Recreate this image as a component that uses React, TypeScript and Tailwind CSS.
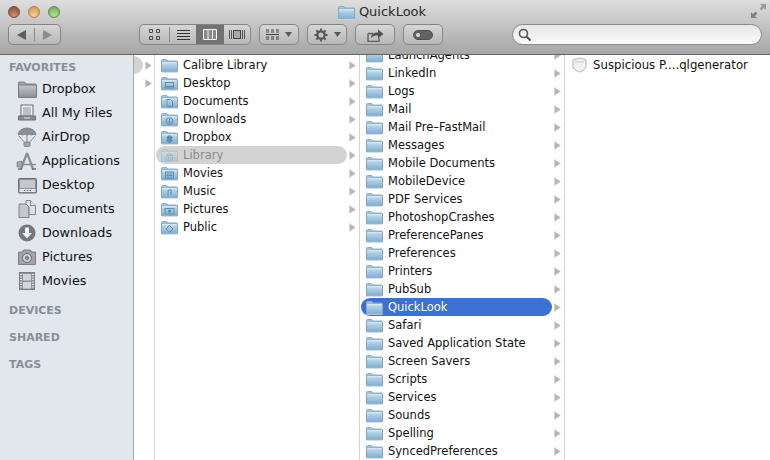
import type { ReactNode } from "react"

const font = "font-['DejaVu_Sans',sans-serif]"

const favorites = ["Dropbox", "All My Files", "AirDrop", "Applications", "Desktop", "Documents", "Downloads", "Pictures", "Movies"]
const homeFolders = ["Calibre Library", "Desktop", "Documents", "Downloads", "Dropbox", "Library", "Movies", "Music", "Pictures", "Public"]
const libraryFolders = [
  "LaunchAgents", "LinkedIn", "Logs", "Mail", "Mail Pre–FastMail", "Messages", "Mobile Documents", "MobileDevice",
  "PDF Services", "PhotoshopCrashes", "PreferencePanes", "Preferences", "Printers", "PubSub", "QuickLook", "Safari",
  "Saved Application State", "Screen Savers", "Scripts", "Services", "Sounds", "Spelling", "SyncedPreferences",
]

const glyphs: Record<string, ReactNode> = {
  Desktop: <><rect x="4.5" y="6.5" width="8" height="5.5" fill="none" /><path d="M5 10.5h7" /></>,
  Documents: <path d="M6 5.5h3.5l2 2v5H6z" fill="none" />,
  Downloads: <><circle cx="8.5" cy="9" r="3.4" fill="none" /><path d="M8.5 7v3.5M7 9.5l1.5 1.5L10 9.5" fill="none" /></>,
  Dropbox: <path d="M8.5 5.5l3 2-1.5 1.5 1.5 1.5-3 2-3-2L7 9 5.5 7.5z" fill="#5f8eb0" />,
  Library: <path d="M5 7.5l3.5-2 3.5 2zM5.5 8.5v3M7.5 8.5v3M9.5 8.5v3M11.5 8.5v3M4.5 12h8" fill="none" />,
  Movies: <><rect x="4.5" y="6" width="8" height="6.5" fill="none" /><path d="M7 6v6.5M10 6v6.5M4.5 9.2h8" /></>,
  Music: <path d="M7 11.5V6.5l3-.8v5" fill="none" />,
  Pictures: <><rect x="4" y="6.5" width="9" height="5.5" fill="none" /><circle cx="8.5" cy="9.2" r="1.2" fill="#5f8eb0" /></>,
  Public: <path d="M8.5 5.5l3.5 3.5-3.5 3.5L5 9z" fill="none" />,
}

function Folder({ name, dim, plain }: { name?: string; dim?: boolean; plain?: boolean }) {
  return (
    <svg width="17" height="15" viewBox="0 0 17 15" className={`shrink-0 ${dim ? "opacity-40" : ""}`}>
      <defs>
        <linearGradient id="folderFace" x1="0" y1="0" x2="0" y2="1">
          <stop offset="0" stopColor="#c4dcee" />
          <stop offset="1" stopColor="#7fb0d3" />
        </linearGradient>
      </defs>
      <path d="M.5 13V2.5q0-1 1-1h4.2l1.3 1.5h8.500q1 0 1 1V13z" fill="#a3c6df" stroke="#86aecb" />
      <rect x=".5" y="4" width="16" height="9.5" fill="url(#folderFace)" stroke="#80a9c8" />
      <path d="M1 4.700h15" stroke="#e2eef6" />
      <path d="M.5 14.300h16" stroke="#d4d4d4" />
      {!plain && name && glyphs[name] && (
        <g stroke="#5f8eb0" strokeWidth="1">{glyphs[name]}</g>
      )}
    </svg>
  )
}

function Arrow() {
  return (
    <svg width="7" height="9" viewBox="0 0 7 9" className="shrink-0">
      <path d="M.5.5l6 4-6 4z" fill="#b5b5b5" stroke="#cfcfcf" strokeWidth=".5" />
    </svg>
  )
}

function SidebarIcon({ name }: { name: string }) {
  const fill = "#8b8f94"
  const dark = "#6b6f74"
  const light = "#e2e4e7"
  switch (name) {
    case "Dropbox":
      return (
        <svg width="19" height="17" viewBox="0 0 19 17">
          <defs>
            <linearGradient id="greyFolder" x1="0" y1="0" x2="0" y2="1">
              <stop offset="0" stopColor="#c6c8cb" />
              <stop offset="1" stopColor="#8a8d91" />
            </linearGradient>
          </defs>
          <path d="M.5 15V2q0-1 1-1h5L8 3h9.500q1 0 1 1v11z" fill="#a5a8ac" stroke={dark} strokeWidth=".8" />
          <rect x=".5" y="4" width="18" height="12.500" rx=".5" fill="url(#greyFolder)" stroke={dark} strokeWidth=".8" />
        </svg>
      )
    case "All My Files":
      return (
        <svg width="20" height="18" viewBox="0 0 20 18">
          <rect x="4" y="1" width="12" height="11" fill="#eef0f2" stroke={dark} />
          <path d="M6 4h8M6 6h8M6 8h8M6 10h8" stroke={fill} />
          <path d="M1.500 12h17v4h-17z" fill={fill} stroke={dark} />
          <path d="M7 14h6" stroke={light} />
        </svg>
      )
    case "AirDrop":
      return (
        <svg width="20" height="20" viewBox="0 0 20 20">
          <path d="M1 8a9 7 0 0 1 18 0q-2-1.500-4.500 0-2.200-1.500-4.500 0-2.300-1.500-4.500 0Q3 6.500 1 8z" fill={fill} stroke={dark} strokeWidth=".7" />
          <path d="M2 9l6 7M18 9l-6 7M10 8v8" stroke={dark} strokeWidth=".8" />
          <rect x="7" y="15" width="6" height="4.500" rx="1" fill="#a3a7ab" stroke={dark} strokeWidth=".7" />
        </svg>
      )
    case "Applications":
      return (
        <svg width="22" height="20" viewBox="0 0 22 20">
          <path d="M11 2L5 18M11 2l6 16" stroke={fill} strokeWidth="2.200" fill="none" />
          <path d="M2 13.500h18" stroke={fill} strokeWidth="1.500" />
          <path d="M2 18h4M16 18h4" stroke={dark} strokeWidth="1.500" />
          <path d="M1 11l5-1v6H1z" fill="#a8abaf" stroke={dark} strokeWidth=".6" />
        </svg>
      )
    case "Desktop":
      return (
        <svg width="19" height="17" viewBox="0 0 19 17">
          <rect x=".5" y="1.500" width="18" height="14.500" rx="1" fill="#8f9398" stroke={dark} />
          <rect x="2" y="3" width="15" height="8" fill="#c4c7cb" />
          <path d="M1.500 12h16v3H1.500z" fill="#e2e4e7" />
          <path d="M6 13.500h1.500M8.800 13.500h1.500M11.500 13.500H13" stroke={dark} />
        </svg>
      )
    case "Documents":
      return (
        <svg width="18" height="18" viewBox="0 0 18 18">
          <path d="M1 4h7l3 3v10.500H1z" fill="#c5c7ca" stroke={dark} strokeWidth=".8" />
          <path d="M8 .5h4.500l5 5v9H11V7L8 4z" fill="#dcdee0" stroke={dark} strokeWidth=".8" />
          <path d="M12.500 .5v5h5" fill="#f5f5f5" stroke={dark} strokeWidth=".8" />
        </svg>
      )
    case "Downloads":
      return (
        <svg width="18" height="18" viewBox="0 0 18 18">
          <circle cx="9" cy="9" r="8.500" fill="#74787d" />
          <path d="M7 3.500h4V9h3l-5 5.500L4 9h3z" fill="#f2f3f4" />
        </svg>
      )
    case "Pictures":
      return (
        <svg width="18" height="16" viewBox="0 0 18 16">
          <path d="M.5 3h4l1-2h7l1 2h4v12.500H.5z" fill="#a0a3a7" stroke={dark} strokeWidth=".8" />
          <circle cx="9" cy="9" r="4.500" fill="#d0d2d5" stroke={dark} />
          <circle cx="9" cy="9" r="2.200" fill="#84888c" />
        </svg>
      )
    default:
      return (
        <svg width="16" height="18" viewBox="0 0 16 18">
          <rect x=".5" y=".5" width="15" height="17" fill="#8f9398" stroke={dark} strokeWidth=".8" />
          <rect x="4" y="2" width="8" height="6.500" fill="#d3d5d8" />
          <rect x="4" y="10" width="8" height="6.500" fill="#d3d5d8" />
          <path d="M1 2.500h2M1 5h2M1 7.500h2M1 10h2M1 12.500h2M1 15h2M13 2.500h2M13 5h2M13 7.500h2M13 10h2M13 12.500h2M13 15h2" stroke="#e6e7e9" />
        </svg>
      )
  }
}

function ToolButton({ className = "", children }: { className?: string; children: ReactNode }) {
  return (
    <div className={`h-[21px] flex items-center justify-center rounded-[5px] border border-[#858585] bg-gradient-to-b from-[#d6d6d6] to-[#b8b8b8] ${className}`}>
      {children}
    </div>
  )
}

function Caret() {
  return (
    <svg width="7" height="5" viewBox="0 0 7 5">
      <path d="M0 0h7L3.500 5z" fill="#5a5a5a" />
    </svg>
  )
}

function Toolbar() {
  return (
    <div className="relative h-[55px] shrink-0 border-b border-[#666] bg-gradient-to-b from-[#dedede] to-[#a6a6a6] flex flex-col">
      <div className="h-[24px] flex items-center">
        <div className="flex items-center gap-[8px] pl-[8px]">
          <span className="w-[12px] h-[12px] rounded-full border border-[#7c4a3c] bg-[radial-gradient(circle_at_50%_85%,#d0936f,#84452f)]" />
          <span className="w-[12px] h-[12px] rounded-full border border-[#b08040] bg-[radial-gradient(circle_at_50%_85%,#f5cf94,#cf9450)]" />
          <span className="w-[12px] h-[12px] rounded-full border border-[#5f8a48] bg-[radial-gradient(circle_at_50%_85%,#b8e090,#6ea552)]" />
        </div>
        <div className="flex-1 flex items-center justify-center gap-[4px]">
          <Folder plain />
          <span className={`${font} text-[13px] text-[#2a2a2a]`}>QuickLook</span>
        </div>
        <div className="w-[66px]" />
      </div>
      <div className="flex items-center pl-[8px] pr-[8px]">
        <ToolButton className="w-[53px]">
          <div className="flex-1 flex justify-center items-center">
            <svg width="9" height="10" viewBox="0 0 9 10"><path d="M9 0v10L0 5z" fill="#5e5e5e" /></svg>
          </div>
          <div className="w-px h-[13px] bg-[#8e8e8e]" />
          <div className="flex-1 flex justify-center items-center">
            <svg width="9" height="10" viewBox="0 0 9 10"><path d="M0 0v10l9-5z" fill="#8c8c8c" /></svg>
          </div>
        </ToolButton>
        <ToolButton className="ml-[78px] w-[112px] overflow-hidden">
          <div className="w-[29px] h-full flex items-center justify-center">
            <svg width="11" height="11" viewBox="0 0 11 11"><path d="M.5.5h3v3h-3zM7.500.5h3v3h-3zM.5 7.500h3v3h-3zM7.500 7.500h3v3h-3z" fill="none" stroke="#4a4a4a" /></svg>
          </div>
          <div className="w-px h-[15px] bg-[#8e8e8e]" />
          <div className="w-[26px] h-full flex items-center justify-center">
            <svg width="13" height="11" viewBox="0 0 13 11"><path d="M0 1.500h13M0 4.500h13M0 7.500h13M0 10.500h13" stroke="#333" /></svg>
          </div>
          <div className="w-[28px] h-full flex items-center justify-center bg-[#727272]">
            <svg width="14" height="11" viewBox="0 0 14 11"><path d="M.5.500h13v10H.5z" fill="#8a8a8a" stroke="#f4f4f4" /><path d="M5 1v9M9.500 1v9" stroke="#f4f4f4" /></svg>
          </div>
          <div className="flex-1 h-full flex items-center justify-center">
            <svg width="16" height="11" viewBox="0 0 16 11"><path d="M.5 1v9M2.500 1v9M13.500 1v9M15.500 1v9" stroke="#555" /><rect x="4.500" y="1.500" width="7" height="8" fill="#a8a8a8" stroke="#444" /></svg>
          </div>
        </ToolButton>
        <ToolButton className="ml-[8px] w-[40px] gap-[6px]">
          <svg width="13" height="11" viewBox="0 0 13 11"><path d="M0 1h3M5 1h3M10 1h3M0 3h3M5 3h3M10 3h3M0 5.500h13M0 8h3M5 8h3M10 8h3M0 10h3M5 10h3M10 10h3" stroke="#444" /></svg>
          <Caret />
        </ToolButton>
        <ToolButton className="ml-[8px] w-[40px] gap-[6px]">
          <svg width="14" height="14" viewBox="0 0 15 15">
            <circle cx="7.500" cy="7.500" r="4" fill="none" stroke="#555" strokeWidth="2.400" />
            <path d="M7.500 .5v2.500M7.500 12v2.500M.5 7.500H3M12 7.500h2.500M2.500 2.500l1.800 1.800M10.700 10.700l1.800 1.800M12.500 2.500l-1.800 1.800M4.300 10.700l-1.800 1.800" stroke="#555" strokeWidth="2" />
          </svg>
          <Caret />
        </ToolButton>
        <ToolButton className="ml-[8px] w-[40px]">
          <svg width="17" height="14" viewBox="0 0 17 14">
            <path d="M1 5.500h5M1 5.500v8h11V10" fill="none" stroke="#5f5f5f" strokeWidth="1.400" />
            <path d="M4 10c0-4 3-5.500 7-5.500V1.500l5.500 4.500-5.500 4.500V7.500C8 7.500 5.500 8 4 10z" fill="#505050" />
          </svg>
        </ToolButton>
        <ToolButton className="ml-[8px] w-[40px]">
          <div className="relative w-[20px] h-[10px] rounded-full bg-[#626262] border border-[#4f4f4f]">
            <span className="absolute left-[2px] top-[2px] w-[4px] h-[4px] rounded-full bg-[#dcdcdc]" />
          </div>
        </ToolButton>
        <div className="ml-[69px] h-[21px] flex-1 flex items-center rounded-full border border-[#8a8a8a] bg-gradient-to-b from-[#e6e6e6] to-[#fbfbfb] pl-[5px]">
          <svg width="14" height="14" viewBox="0 0 14 14">
            <circle cx="5.500" cy="5.500" r="4" fill="none" stroke="#555" strokeWidth="1.600" />
            <path d="M8.500 8.500l4 4" stroke="#555" strokeWidth="2.200" />
          </svg>
        </div>
      </div>
      {/* fullscreen arrows */}
      <svg width="15" height="14" viewBox="0 0 15 14" className="absolute right-[4px] top-[4px]">
        <path d="M9 0h6v6l-2-2-2.500 2.500-2-2L11 2z" fill="#9a9a9a" />
        <path d="M0 8l2 2 2.500-2.500 2 2L4 12l2 2H0z" fill="#828282" />
      </svg>
    </div>
  )
}

function Sidebar() {
  const heading = `${font} h-[27px] flex items-center pl-[9px] text-[11px] font-bold text-[#868e98]`
  return (
    <div className="w-[134px] shrink-0 border-r border-[#a9a9a9] bg-[#e2e7ed] pt-px">
      <div className={`${font} h-[21px] pt-[3px] flex items-center pl-[9px] text-[11px] font-bold text-[#868e98]`}>FAVORITES</div>
      {favorites.map((item) => (
        <div key={item} className="h-[24px] flex items-center">
          <div className="w-[42px] h-full flex items-center justify-center pl-[16px] pr-[4px] shrink-0">
            <SidebarIcon name={item} />
          </div>
          <span className={`${font} text-[12.75px] text-[#111]`}>{item}</span>
        </div>
      ))}
      <div className="h-[5px]" />
      <div className={heading}>DEVICES</div>
      <div className={heading}>SHARED</div>
      <div className={heading}>TAGS</div>
    </div>
  )
}

function FolderRow({ name, selected, inactive }: { name: string; selected?: boolean; inactive?: boolean }) {
  const pill = selected ? "bg-[#3a72d4] text-white" : inactive ? "bg-[#d3d3d3] text-[#8a8a8a]" : "text-[#111]"
  return (
    <div className="h-[18px] flex items-center pl-[1px] gap-[2px]">
      <div className={`w-[191px] h-[18px] flex items-center rounded-full pl-[5px] gap-[5px] ${pill}`}>
        <Folder name={name} dim={inactive} />
        <span className={`${font} text-[11.5px] whitespace-nowrap pt-[2px]`}>{name}</span>
      </div>
      <Arrow />
    </div>
  )
}

export default function App() {
  return (
    <div className="w-[770px] h-[460px] flex flex-col overflow-hidden bg-white">
      <Toolbar />
      <div className="flex-1 flex min-h-0">
        <Sidebar />
        <div className="relative w-[21px] shrink-0 border-r border-[#d4d4d4] overflow-hidden pt-px">
          <span className="absolute left-[-10px] top-px w-[19px] h-[18px] rounded-full bg-[#d3d3d3]" />
          <div className="relative flex flex-col items-end pr-[2px]">
            <div className="h-[18px] flex items-center"><Arrow /></div>
            <div className="h-[18px] flex items-center"><Arrow /></div>
          </div>
        </div>
        <div className="w-[205px] shrink-0 border-r border-[#d4d4d4] pt-px">
          {homeFolders.map((f) => (
            <FolderRow key={f} name={f} inactive={f === "Library"} />
          ))}
        </div>
        <div className="w-[205px] shrink-0 border-r border-[#d4d4d4] overflow-hidden">
          <div className="-mt-[9px]">
            {libraryFolders.map((f) => (
              <FolderRow key={f} name={f} selected={f === "QuickLook"} />
            ))}
          </div>
        </div>
        <div className="flex-1 pt-px">
          <div className="h-[18px] flex items-center pl-[7px] gap-[6px]">
            <svg width="15" height="16" viewBox="0 0 15 16">
              <path d="M7.500 1l6.500 2v6c0 3-3.500 5-6.500 6C4.500 14 1 12 1 9V3z" fill="#f1f1f1" stroke="#b5b5b5" />
              <path d="M3 5h9" stroke="#c9c9c9" />
            </svg>
            <span className={`${font} text-[11.75px] text-[#111] pt-[2px]`}>Suspicious P....qlgenerator</span>
          </div>
        </div>
      </div>
    </div>
  )
}
